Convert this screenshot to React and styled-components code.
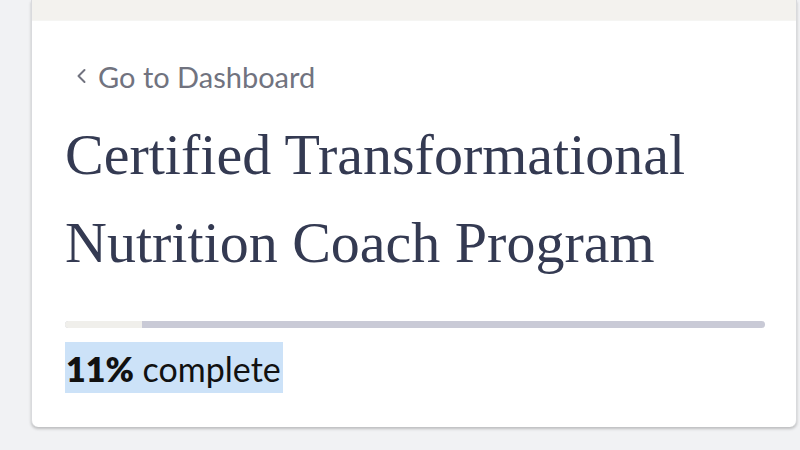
import React from 'react';
import styled, { createGlobalStyle } from 'styled-components';

const GlobalStyle = createGlobalStyle`
  html, body {
    margin: 0;
    padding: 0;
    background: #f1f2f4;
    overflow: hidden;
  }
`;

const Page = styled.div`
  width: 800px;
  height: 450px;
  padding-left: 31px;
  box-sizing: border-box;
`;

const Card = styled.section`
  width: 766px;
  background: #fff;
  border-left: 1px solid #d9dadd;
  border-right: 1px solid #d9dadd;
  border-radius: 0 0 7px 7px;
  box-shadow: 0 2px 3px rgba(0, 0, 0, 0.22);
  box-sizing: border-box;
  overflow: hidden;
`;

const TopBand = styled.div`
  height: 21px;
  background: #f3f2ee;
  border-bottom: 1px solid #f5f5f3;
  box-sizing: border-box;
`;

const Body = styled.div`
  padding: 37px 31px 34px 33px;
`;

const BackLink = styled.a`
  display: flex;
  align-items: center;
  gap: 11px;
  height: 36px;
  padding-left: 11px;
  color: #71737f;
  font-family: Lato, "Noto Sans", sans-serif;
  font-size: 29px;
  text-decoration: none;
`;

const Title = styled.h1`
  margin: 17px 0 0;
  font-family: "Liberation Serif", "Times New Roman", serif;
  font-weight: 400;
  font-size: 58px;
  line-height: 88px;
  color: #343a52;
`;

const Track = styled.div`
  margin-top: 34px;
  height: 7px;
  border-radius: 4px;
  background: #c9cad6;
  overflow: hidden;
`;

const Fill = styled.div`
  height: 100%;
  background: #f0efeb;
`;

const Status = styled.div`
  margin-top: 14px;
  font-family: Lato, "Noto Sans", sans-serif;
  font-size: 34px;
  color: #111;
`;

const Selected = styled.span`
  display: inline-block;
  height: 51px;
  line-height: 53px;
  padding: 0 2px 0 1px;
  background: #cce2f8;

  b {
    font-weight: 800;
  }
`;

function Chevron() {
  return (
    <svg width="11" height="16" viewBox="0 0 11 16" fill="none">
      <path d="M8.5 2 L2.5 8 L8.5 14" stroke="#71737f" strokeWidth="2" strokeLinecap="round" strokeLinejoin="round" />
    </svg>
  );
}

export default function App() {
  const progress = 11;
  return (
    <Page>
      <GlobalStyle />
      <Card>
        <TopBand />
        <Body>
          <BackLink href="#">
            <Chevron />
            Go to Dashboard
          </BackLink>
          <Title>Certified Transformational Nutrition Coach Program</Title>
          <Track>
            <Fill style={{ width: progress + '%' }} />
          </Track>
          <Status>
            <Selected><b>{progress}%</b> complete</Selected>
          </Status>
        </Body>
      </Card>
    </Page>
  );
}
